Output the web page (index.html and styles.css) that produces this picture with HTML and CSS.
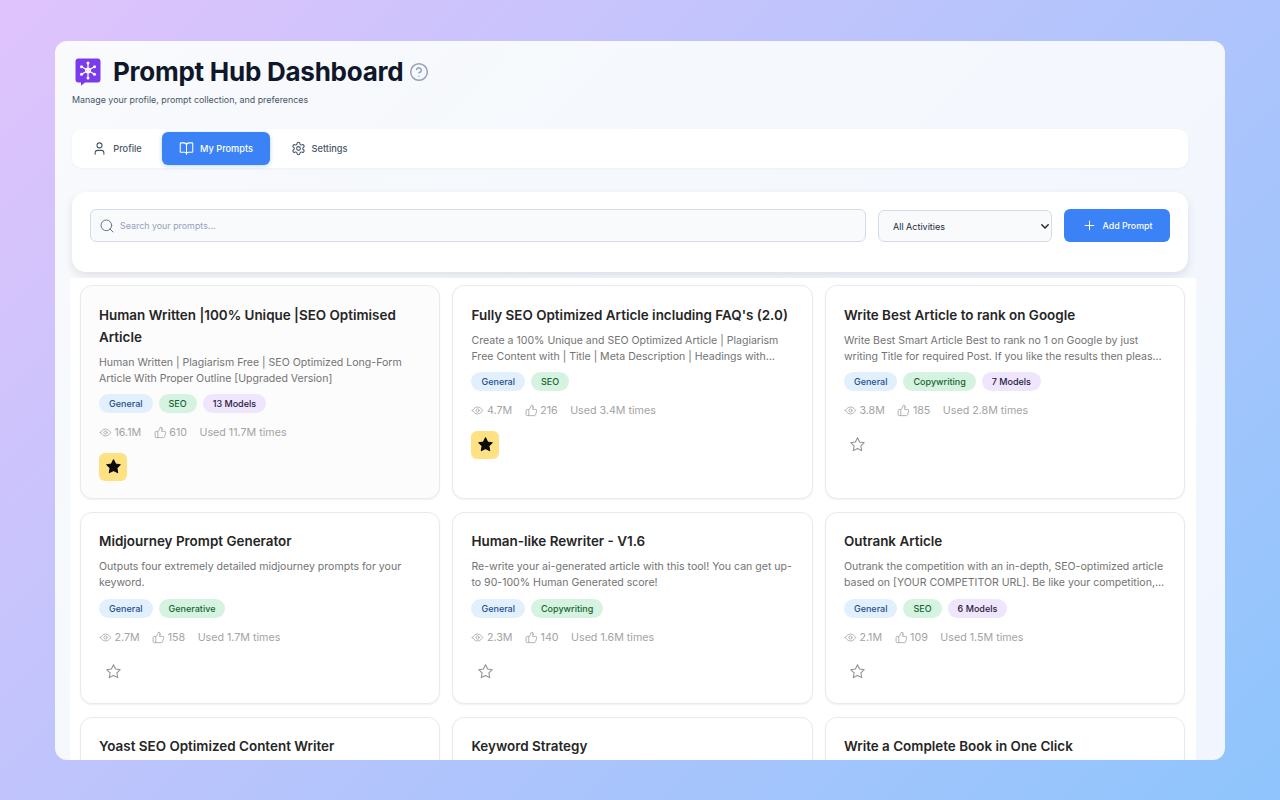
FILE: index.html
```html
<!DOCTYPE html>
<html lang="en">
<head>
<meta charset="utf-8">
<title>Prompt Hub Dashboard</title>
<link rel="stylesheet" href="styles.css">
</head>
<body>
<svg class="defs" width="0" height="0" aria-hidden="true">
  <defs>
    <symbol id="eye" viewBox="0 0 24 24"><path d="M2.5 12S6 5.5 12 5.5 21.500 12 21.500 12 18 18.500 12 18.500 2.500 12 2.500 12z"/><circle cx="12" cy="12" r="3"/></symbol>
    <symbol id="thumb" viewBox="0 0 24 24"><path d="M7 10v11.500M15 5.900 14 10h5.800a2 2 0 0 1 1.900 2.500l-2.300 7.600a2 2 0 0 1-1.900 1.400H4a2 2 0 0 1-2-2V12a2 2 0 0 1 2-2h2.800a2 2 0 0 0 1.800-1.100L12 2a3.100 3.100 0 0 1 3 3.900z"/></symbol>
    <symbol id="star" viewBox="0 0 24 24"><path d="M12 2.500l2.950 6 6.600.95-4.780 4.650 1.130 6.570L12 17.560 6.100 20.670l1.130-6.570L2.450 9.450l6.600-.95z"/></symbol>
  </defs>
</svg>
<main class="window">
  <header class="head">
    <div class="title-row">
      <svg class="logo" viewBox="0 0 26 28" aria-hidden="true">
        <path class="logo-bg" d="M3.500 0.500h19a3 3 0 0 1 3 3v18a3 3 0 0 1-3 3H10l-4 3.200v-3.200H3.500a3 3 0 0 1-3-3v-18a3 3 0 0 1 3-3z"/>
        <g class="logo-lines">
          <path d="M13 12.500V5.500M13 12.500v7M13 12.500l-6-3.500M13 12.500l6-3.500M13 12.500l-6 3.500M13 12.500l6 3.500"/>
          <circle cx="13" cy="12.500" r="2.400"/>
          <circle cx="13" cy="5" r="1.500"/><circle cx="13" cy="20" r="1.500"/>
          <circle cx="6.500" cy="8.700" r="1.500"/><circle cx="19.500" cy="8.700" r="1.500"/>
          <circle cx="6.500" cy="16.300" r="1.500"/><circle cx="19.500" cy="16.300" r="1.500"/>
        </g>
      </svg>
      <h1 class="title">Prompt Hub Dashboard</h1>
      <svg class="help" viewBox="0 0 24 24" aria-hidden="true"><circle cx="12" cy="12" r="10"/><path d="M9.100 9a3 3 0 0 1 5.800 1c0 2-3 3-3 3M12 17h.01"/></svg>
    </div>
    <p class="subtitle">Manage your profile, prompt collection, and preferences</p>
  </header>

  <nav class="tabs">
    <a class="tab tab-profile">
      <svg class="tab-icon" viewBox="0 0 24 24" aria-hidden="true"><path d="M19 21v-2a4 4 0 0 0-4-4H9a4 4 0 0 0-4 4v2"/><circle cx="12" cy="7" r="4"/></svg>
      Profile
    </a>
    <a class="tab tab-active">
      <svg class="tab-icon tab-icon-lg" viewBox="0 0 24 24" aria-hidden="true"><path d="M12 7v14M3 18a1 1 0 0 1-1-1V4a1 1 0 0 1 1-1h5a4 4 0 0 1 4 4 4 4 0 0 1 4-4h5a1 1 0 0 1 1 1v13a1 1 0 0 1-1 1h-6a3 3 0 0 0-3 3 3 3 0 0 0-3-3z"/></svg>
      My Prompts
    </a>
    <a class="tab tab-settings">
      <svg class="tab-icon" viewBox="0 0 24 24" aria-hidden="true"><path d="M12.220 2h-.44a2 2 0 0 0-2 2v.18a2 2 0 0 1-1 1.730l-.43.250a2 2 0 0 1-2 0l-.15-.080a2 2 0 0 0-2.730.730l-.22.380a2 2 0 0 0 .730 2.730l.15.100a2 2 0 0 1 1 1.720v.510a2 2 0 0 1-1 1.740l-.15.090a2 2 0 0 0-.730 2.730l.22.380a2 2 0 0 0 2.730.730l.15-.080a2 2 0 0 1 2 0l.43.250a2 2 0 0 1 1 1.730V20a2 2 0 0 0 2 2h.44a2 2 0 0 0 2-2v-.18a2 2 0 0 1 1-1.730l.43-.250a2 2 0 0 1 2 0l.15.080a2 2 0 0 0 2.730-.730l.22-.390a2 2 0 0 0-.730-2.730l-.15-.080a2 2 0 0 1-1-1.740v-.5a2 2 0 0 1 1-1.740l.15-.090a2 2 0 0 0 .730-2.730l-.22-.380a2 2 0 0 0-2.730-.730l-.15.080a2 2 0 0 1-2 0l-.43-.250a2 2 0 0 1-1-1.730V4a2 2 0 0 0-2-2z"/><circle cx="12" cy="12" r="3"/></svg>
      Settings
    </a>
  </nav>

  <section class="toolbar">
    <div class="search">
      <svg class="search-icon" viewBox="0 0 24 24" aria-hidden="true"><circle cx="11" cy="11" r="8"/><path d="m21 21-4.300-4.300"/></svg>
      <span class="search-text">Search your prompts...</span>
    </div>
    <select class="filter"><option>All Activities</option></select>
    <button class="add-btn" type="button">
      <svg class="plus" viewBox="0 0 24 24" aria-hidden="true"><path d="M5 12h14M12 5v14"/></svg>
      Add Prompt
    </button>
  </section>

  <section class="panel">
    <div class="grid">
      <article class="card card-tint">
        <h2 class="card-title">Human Written |100% Unique |SEO Optimised Article</h2>
        <p class="card-desc">Human Written | Plagiarism Free | SEO Optimized Long-Form Article With Proper Outline [Upgraded Version]</p>
        <div class="tags"><span class="tag tag-blue">General</span><span class="tag tag-green">SEO</span><span class="tag tag-purple">13 Models</span></div>
        <div class="stats"><span class="stat"><svg class="stat-icon"><use href="#eye"/></svg>16.1M</span><span class="stat"><svg class="stat-icon"><use href="#thumb"/></svg>610</span><span class="stat">Used 11.7M times</span></div>
        <button class="fav fav-on" type="button"><svg class="fav-icon"><use href="#star"/></svg></button>
      </article>
      <article class="card">
        <h2 class="card-title">Fully SEO Optimized Article including FAQ's (2.0)</h2>
        <p class="card-desc">Create a 100% Unique and SEO Optimized Article | Plagiarism Free Content with | Title | Meta Description | Headings with Proper H1-H6 Tags</p>
        <div class="tags"><span class="tag tag-blue">General</span><span class="tag tag-green">SEO</span></div>
        <div class="stats"><span class="stat"><svg class="stat-icon"><use href="#eye"/></svg>4.7M</span><span class="stat"><svg class="stat-icon"><use href="#thumb"/></svg>216</span><span class="stat">Used 3.4M times</span></div>
        <button class="fav fav-on" type="button"><svg class="fav-icon"><use href="#star"/></svg></button>
      </article>
      <article class="card">
        <h2 class="card-title">Write Best Article to rank on Google</h2>
        <p class="card-desc">Write Best Smart Article Best to rank no 1 on Google by just writing Title for required Post. If you like the results then please hit the like button</p>
        <div class="tags"><span class="tag tag-blue">General</span><span class="tag tag-green">Copywriting</span><span class="tag tag-purple">7 Models</span></div>
        <div class="stats"><span class="stat"><svg class="stat-icon"><use href="#eye"/></svg>3.8M</span><span class="stat"><svg class="stat-icon"><use href="#thumb"/></svg>185</span><span class="stat">Used 2.8M times</span></div>
        <button class="fav" type="button"><svg class="fav-icon"><use href="#star"/></svg></button>
      </article>
      <article class="card">
        <h2 class="card-title">Midjourney Prompt Generator</h2>
        <p class="card-desc">Outputs four extremely detailed midjourney prompts for your keyword.</p>
        <div class="tags"><span class="tag tag-blue">General</span><span class="tag tag-green">Generative</span></div>
        <div class="stats"><span class="stat"><svg class="stat-icon"><use href="#eye"/></svg>2.7M</span><span class="stat"><svg class="stat-icon"><use href="#thumb"/></svg>158</span><span class="stat">Used 1.7M times</span></div>
        <button class="fav" type="button"><svg class="fav-icon"><use href="#star"/></svg></button>
      </article>
      <article class="card">
        <h2 class="card-title">Human-like Rewriter - V1.6</h2>
        <p class="card-desc">Re-write your ai-generated article with this tool! You can get up-to 90-100% Human Generated score!</p>
        <div class="tags"><span class="tag tag-blue">General</span><span class="tag tag-green">Copywriting</span></div>
        <div class="stats"><span class="stat"><svg class="stat-icon"><use href="#eye"/></svg>2.3M</span><span class="stat"><svg class="stat-icon"><use href="#thumb"/></svg>140</span><span class="stat">Used 1.6M times</span></div>
        <button class="fav" type="button"><svg class="fav-icon"><use href="#star"/></svg></button>
      </article>
      <article class="card">
        <h2 class="card-title">Outrank Article</h2>
        <p class="card-desc">Outrank the competition with an in-depth, SEO-optimized article based on [YOUR COMPETITOR URL]. Be like your competition, just a little better</p>
        <div class="tags"><span class="tag tag-blue">General</span><span class="tag tag-green">SEO</span><span class="tag tag-purple">6 Models</span></div>
        <div class="stats"><span class="stat"><svg class="stat-icon"><use href="#eye"/></svg>2.1M</span><span class="stat"><svg class="stat-icon"><use href="#thumb"/></svg>109</span><span class="stat">Used 1.5M times</span></div>
        <button class="fav" type="button"><svg class="fav-icon"><use href="#star"/></svg></button>
      </article>
      <article class="card">
        <h2 class="card-title">Yoast SEO Optimized Content Writer</h2>
      </article>
      <article class="card">
        <h2 class="card-title">Keyword Strategy</h2>
      </article>
      <article class="card">
        <h2 class="card-title">Write a Complete Book in One Click</h2>
      </article>
    </div>
  </section>
</main>
</body>
</html>
```
FILE: styles.css
```css
* { box-sizing: border-box; }
html, body { height: 100%; }
body {
  margin: 0;
  height: 800px;
  overflow: hidden;
  padding: 41px 55px 40px;
  background: linear-gradient(135deg, #e0c3fc 0%, #8ec5fc 100%);
  font-family: Inter, "Liberation Sans", sans-serif;
  color: #0f172a;
}
.defs { position: absolute; }
.window {
  height: 719px;
  overflow: hidden;
  border-radius: 12px;
  background: linear-gradient(135deg, #f8fafc 0%, #f1f5fe 100%);
  padding: 14px 37px 0 17px;
}
.head { height: 74px; }
.title-row { display: flex; align-items: center; height: 34px; padding-left: 3px; }
.logo { width: 26px; height: 28px; margin-right: 12px; flex: none; }
.logo-bg { fill: #7c3aed; }
.logo-lines path { stroke: #fff; stroke-width: 1.300; fill: none; }
.logo-lines circle { fill: #fff; }
.logo-lines circle:first-of-type { fill: none; stroke: #fff; stroke-width: 1.300; }
.title { margin: 0; font-size: 26px; line-height: 34px; font-weight: 700; letter-spacing: -0.25px; color: #0f172a; }
.help { width: 20px; height: 20px; margin-left: 6px; fill: none; stroke: #94a3b8; stroke-width: 1.800; stroke-linecap: round; stroke-linejoin: round; }
.subtitle { margin: 3.500px 0 0; font-size: 8.900px; line-height: 14px; color: #475569; }

.tabs {
  display: flex;
  align-items: center;
  gap: 4px;
  height: 39px;
  padding: 3px 4px;
  background: #fff;
  border-radius: 10px;
  box-shadow: 0 1px 3px rgba(15, 23, 42, .04);
}
.tab {
  display: flex;
  align-items: center;
  justify-content: center;
  gap: 6px;
  height: 33px;
  border-radius: 6px;
  font-size: 9.200px;
  font-weight: 500;
  color: #475569;
}
.tab-profile { width: 82px; }
.tab-active { width: 108px; background: #3b82f6; color: #fff; box-shadow: 0 1px 4px rgba(59, 130, 246, .35); }
.tab-settings { width: 90px; }
.tab-icon { width: 15px; height: 15px; fill: none; stroke: currentColor; stroke-width: 1.700; stroke-linecap: round; stroke-linejoin: round; }
.tab-icon-lg { width: 15px; height: 15px; }

.toolbar {
  display: flex;
  align-items: flex-start;
  gap: 12px;
  height: 80px;
  margin-top: 24px;
  padding: 17px 18px;
  background: #fff;
  border-radius: 14px;
  box-shadow: 0 4px 10px rgba(15, 23, 42, .10);
}
.search {
  display: flex;
  align-items: center;
  flex: 1;
  height: 33px;
  padding-left: 8px;
  background: #f8fafc;
  border: 1px solid #d3dce8;
  border-radius: 6px;
}
.search-icon { width: 16px; height: 16px; margin-right: 5px; fill: none; stroke: #64748b; stroke-width: 1.500; stroke-linecap: round; }
.search-text { font-size: 8.900px; color: #94a3b8; }
.filter {
  appearance: none;
  width: 174px;
  height: 32px;
  margin-top: 1px;
  padding: 0 0 0 14px;
  background: #f8fafc url("data:image/svg+xml,%3Csvg xmlns='http://www.w3.org/2000/svg' viewBox='0 0 8 5'%3E%3Cpath d='M.8.8 4 4l3.200-3.200' fill='none' stroke='%23222' stroke-width='1.400' stroke-linecap='round' stroke-linejoin='round'/%3E%3C/svg%3E") no-repeat right 2.500px center / 8px 5px;
  border: 1px solid #d3dce8;
  border-radius: 6px;
  font-family: inherit;
  font-size: 9px;
  color: #1e293b;
}
.add-btn {
  display: flex;
  align-items: center;
  justify-content: center;
  gap: 6px;
  width: 106px;
  height: 33px;
  border: 0;
  border-radius: 6px;
  background: #3b82f6;
  color: #fff;
  font-family: inherit;
  font-size: 8.800px;
  font-weight: 500;
}
.plus { width: 15px; height: 15px; fill: none; stroke: #fff; stroke-width: 1.600; stroke-linecap: round; }

.panel {
  margin: 6px -8px 0 -2px;
  padding: 7px 11px 0 10px;
  background: #fff;
}
.grid {
  display: grid;
  grid-template-columns: repeat(3, 1fr);
  gap: 12.750px 12.400px;
}
.card {
  padding: 17.500px 18px 17.500px;
  background: #fff;
  border: 1px solid #e8eaee;
  border-radius: 12px;
  box-shadow: 0 1px 2px rgba(15, 23, 42, .06);
}
.card-tint { background: #fcfcfc; }
.card-title { margin: 0 0 7px; font-size: 13.450px; line-height: 22px; font-weight: 600; color: #262626; }
.card-desc {
  display: -webkit-box;
  -webkit-line-clamp: 2;
  -webkit-box-orient: vertical;
  overflow: hidden;
  margin: 0 0 7.500px;
  font-size: 10.550px;
  line-height: 16px;
  color: #737373;
}
.tags { display: flex; gap: 6px; margin-bottom: 9.500px; }
.tag { height: 19px; padding: 0 10px; border-radius: 10px; font-size: 9px; line-height: 19px; font-weight: 500; }
.tag-blue { background: #e2f0fe; color: #1e4e8c; }
.tag-green { background: #d6f3e2; color: #166534; }
.tag-purple { background: #efe5fd; color: #27213a; }
.stats { display: flex; gap: 12.500px; height: 20px; align-items: center; font-size: 10.700px; color: #a3a3a3; }
.stat { display: flex; align-items: center; gap: 2.500px; }
.stat-icon { width: 13px; height: 13px; fill: none; stroke: #a3a3a3; stroke-width: 1.500; stroke-linecap: round; stroke-linejoin: round; }
.fav {
  display: flex;
  align-items: center;
  justify-content: center;
  width: 28px;
  height: 28px;
  margin-top: 10px;
  padding: 0;
  border: 0;
  border-radius: 6px;
  background: transparent;
}
.fav-icon { width: 17px; height: 17px; fill: none; stroke: #8f8f8f; stroke-width: 1.500; stroke-linejoin: round; }
.fav-on { background: #fde183; }
.fav-on .fav-icon { fill: #0b0b0b; stroke: #0b0b0b; }
```
